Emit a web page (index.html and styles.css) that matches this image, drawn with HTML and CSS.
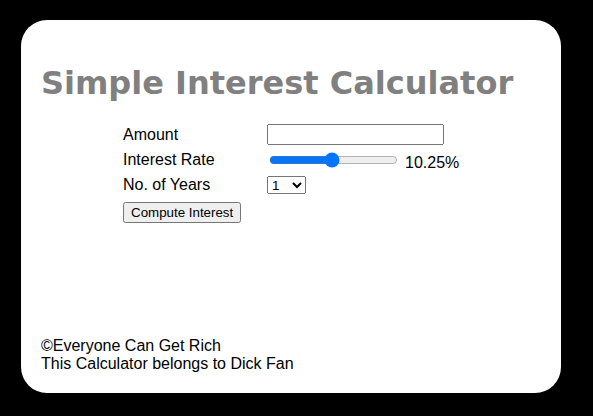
FILE: index.html
```html
<!DOCTYPE html>
<html>
<head>
<meta charset="utf-8">
<link rel="stylesheet" href="styles.css">
</head>
<body>
<div class="card">
  <h1 class="title">Simple Interest Calculator</h1>
  <form class="form">
    <label class="label" for="amount">Amount</label>
    <div class="field"><input class="amount" id="amount" type="text"></div>
    <label class="label" for="rate">Interest Rate</label>
    <div class="field"><input class="rate" id="rate" type="range" min="1" max="20" step="0.25" value="10.25"><span class="rate-value">10.25%</span></div>
    <label class="label" for="years">No. of Years</label>
    <div class="field"><select class="years" id="years"><option>1</option><option>2</option><option>3</option><option>4</option><option>5</option></select></div>
    <div class="button-row"><button class="compute" type="button">Compute Interest</button></div>
  </form>
  <div class="spacer"></div>
  <footer class="footer">
    <div>&copy;Everyone Can Get Rich</div>
    <div>This Calculator belongs to Dick Fan</div>
  </footer>
</div>
</body>
</html>
```
FILE: styles.css
```css
html, body {
  margin: 0;
  padding: 0;
  background: #000;
}
body {
  font-family: "Liberation Sans", Arial, sans-serif;
  font-size: 16px;
  color: #000;
}
.card {
  box-sizing: border-box;
  margin: 20px 0 0 21px;
  width: 540px;
  height: 373px;
  background: #fff;
  border-radius: 26px;
  padding: 20px;
  display: flex;
  flex-direction: column;
}
.title {
  margin: 25px 0 0 0;
  font-family: "DejaVu Sans", Verdana, sans-serif;
  font-weight: bold;
  font-size: 32px;
  line-height: 36px;
  color: #808080;
}
.form {
  margin: 21px 0 0 82px;
  display: grid;
  grid-template-columns: 144px auto;
  grid-auto-rows: 25px;
  align-items: center;
}
.label {
  line-height: 18px;
}
.field {
  display: flex;
  align-items: center;
}
.amount {
  box-sizing: border-box;
  width: 177px;
  height: 21px;
  margin: 0;
}
.rate {
  margin: 0 2px;
}
.rate-value {
  margin-left: 5px;
  position: relative;
  top: 3px;
}
.years {
  box-sizing: border-box;
  width: 39px;
  height: 18px;
  margin: 1px 0 0 0;
}
.button-row {
  grid-column: 1 / span 2;
  padding-top: 5px;
}
.compute {
  margin: 0;
}
.spacer {
  flex: 1;
}
.footer {
  line-height: 18px;
}
```
